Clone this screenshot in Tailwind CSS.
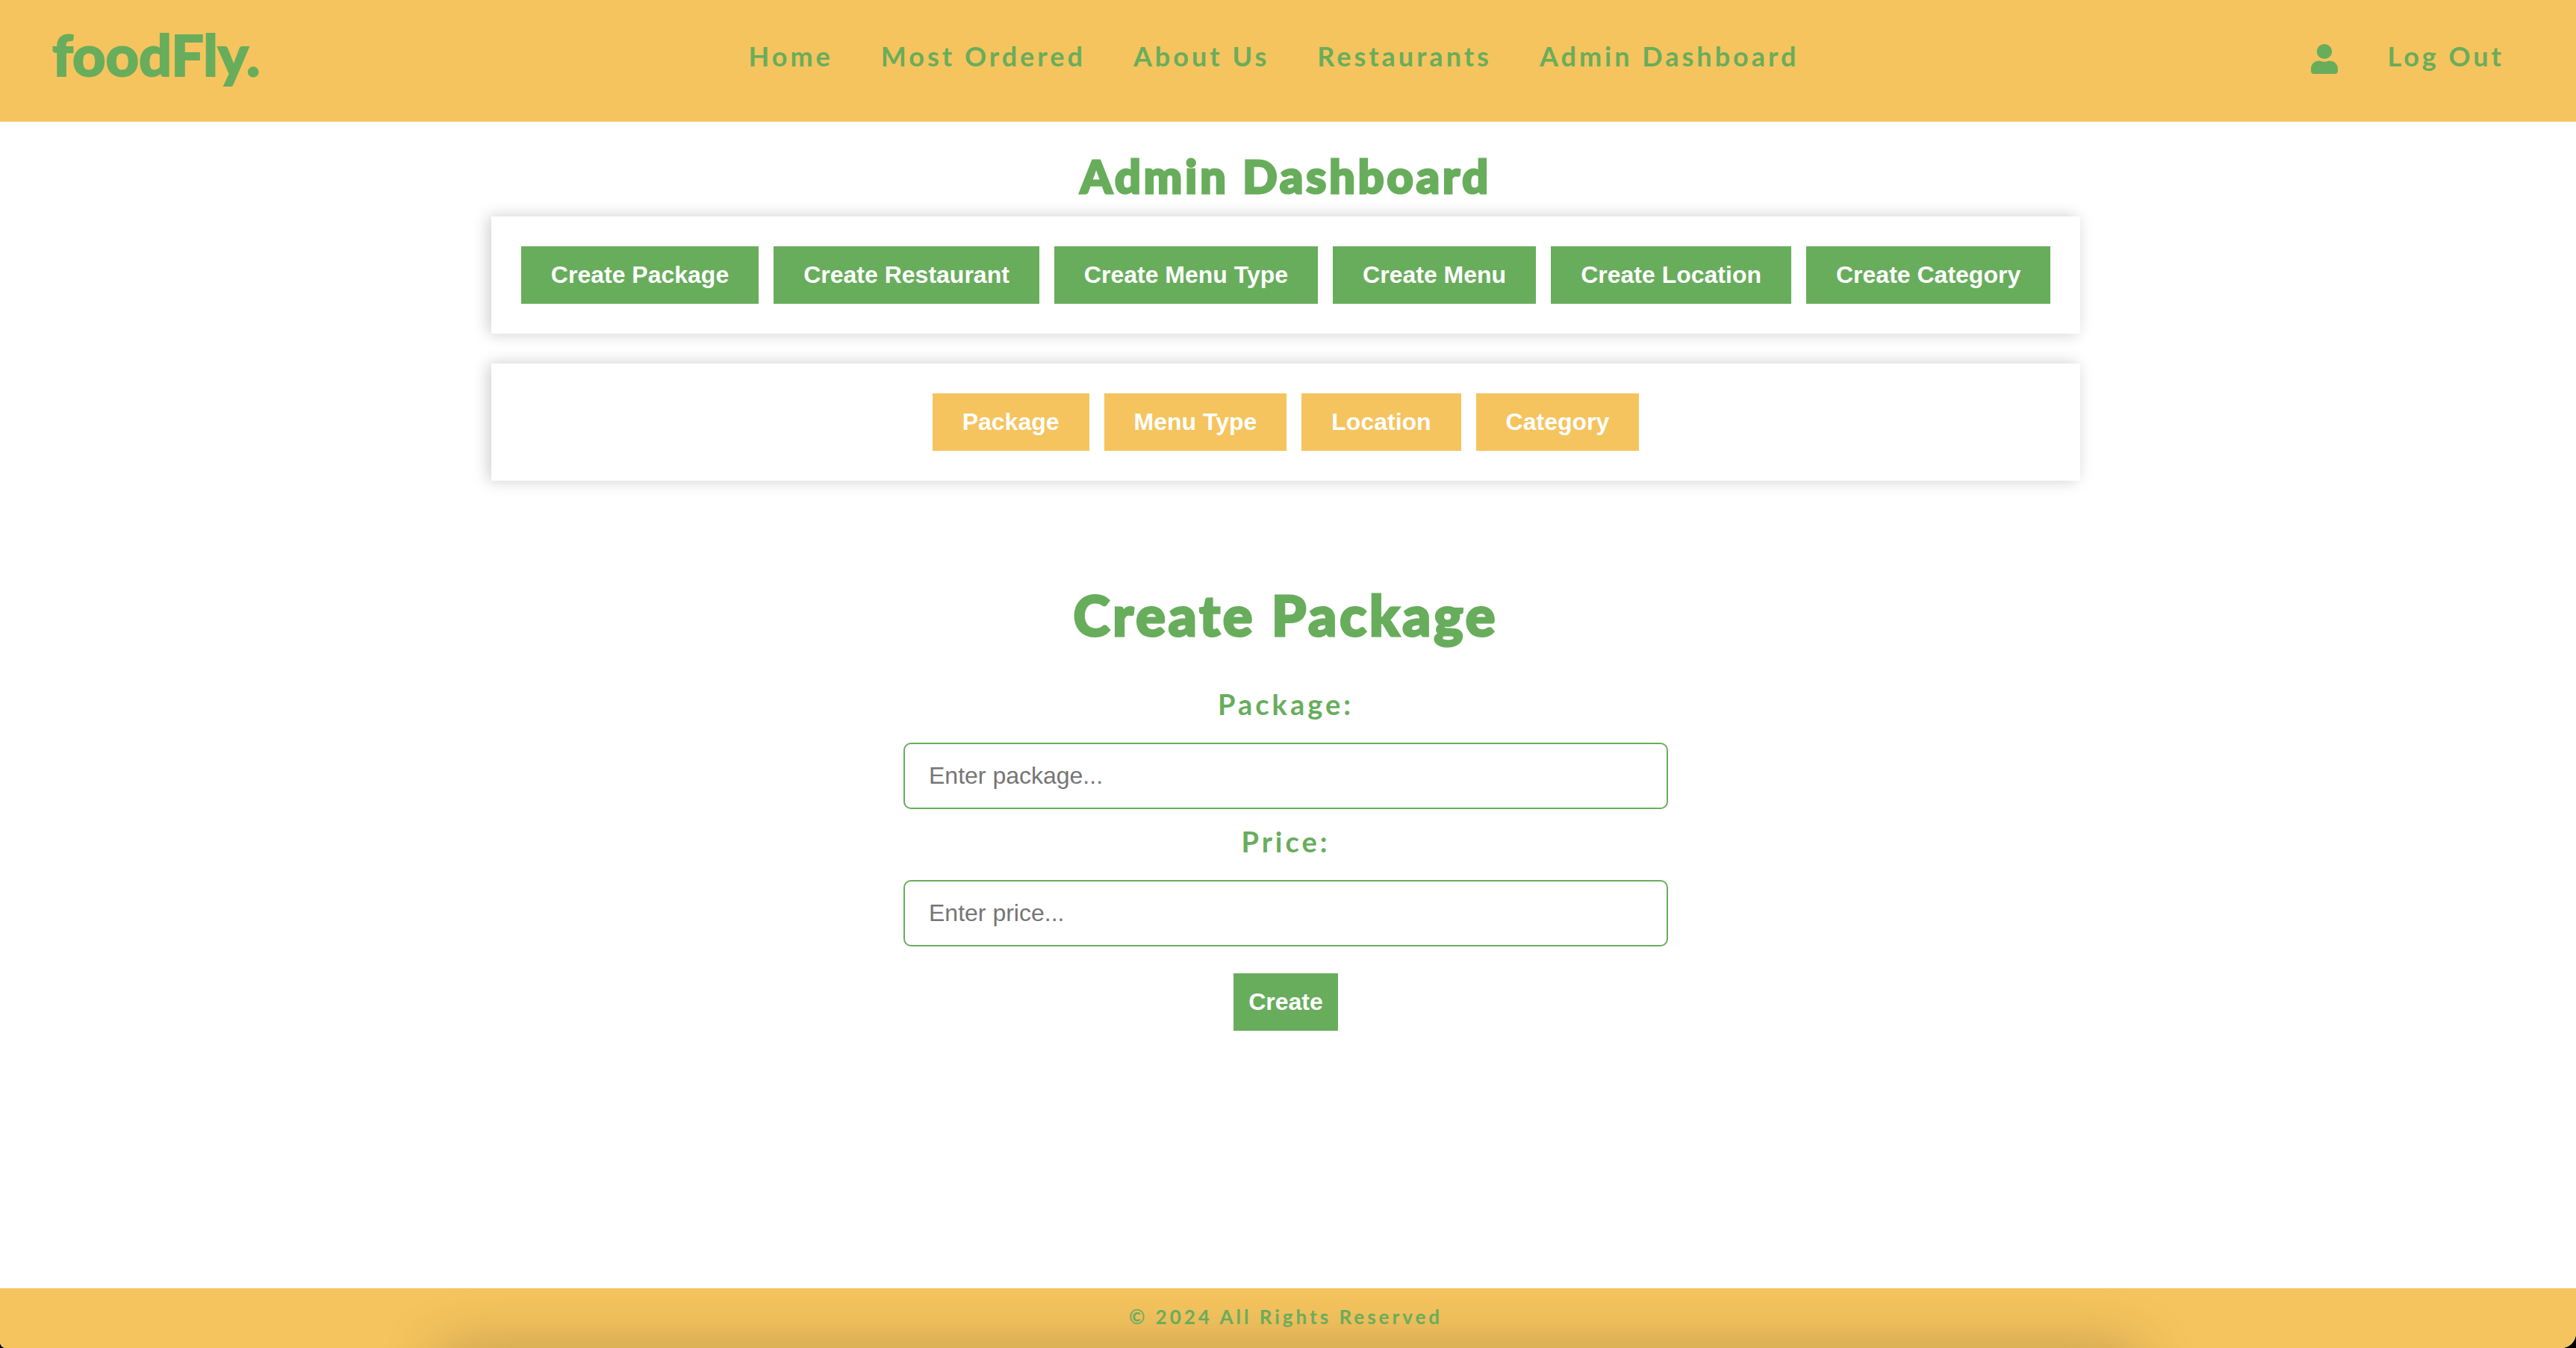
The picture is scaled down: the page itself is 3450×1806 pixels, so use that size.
<!DOCTYPE html>
<html lang="en" class="bg-black">
<head>
<meta charset="utf-8">
<title>foodFly. | Admin Dashboard</title>
<script src="https://cdn.jsdelivr.net/npm/@tailwindcss/browser@4"></script>
</head>
<body class="flex min-h-screen flex-col overflow-hidden rounded-bl-[8px] rounded-br-[20px] bg-white font-[Lato,sans-serif] text-[#68ad5c]">

  <header class="grid h-[163px] grid-cols-[1fr_auto_1fr] items-start bg-[#f5c45e] pr-24 pl-[70px]">
    <a href="#" class="pt-[26px] text-[77px] leading-[92px] font-black [-webkit-text-stroke:2px_currentColor]">foodFly.</a>
    <nav class="flex gap-16 pt-[52px] pr-3 text-[36px] leading-[46px] font-bold tracking-[4px]">
      <a href="#">Home</a>
      <a href="#">Most Ordered</a>
      <a href="#">About Us</a>
      <a href="#">Restaurants</a>
      <a href="#">Admin Dashboard</a>
    </nav>
    <div class="flex items-start justify-end gap-[66px] pt-[52px] text-[36px] leading-[46px] font-bold tracking-[4px]">
      <a href="#" aria-label="Profile" class="pt-[7px]">
        <svg class="h-10 w-9" viewBox="0 0 448 512" preserveAspectRatio="none" fill="currentColor"><path d="M224 256a128 128 0 1 0 0-256 128 128 0 0 0 0 256zm89.600 32h-16.700a174 174 0 0 1-145.800 0h-16.700C60.200 288 0 348.200 0 422.400V464c0 26.500 21.500 48 48 48h352c26.500 0 48-21.500 48-48v-41.600c0-74.200-60.200-134.400-134.400-134.400z"/></svg>
      </a>
      <a href="#">Log Out</a>
    </div>
  </header>

  <main class="flex flex-col items-center pr-1.5">
    <h1 class="pt-[37px] text-[61px] leading-[72px] font-black tracking-[4px] [-webkit-text-stroke:3px_currentColor]">Admin Dashboard</h1>

    <div class="mt-[18px] flex flex-col gap-10 font-['Liberation_Sans',sans-serif] text-[32px] leading-[37px] font-bold text-white">
      <div class="flex justify-center gap-5 bg-white p-10 shadow-[-4px_0_20px_rgba(0,0,0,0.2)]">
        <button class="bg-[#68ad5c] px-10 py-5">Create Package</button>
        <button class="bg-[#68ad5c] px-10 py-5">Create Restaurant</button>
        <button class="bg-[#68ad5c] px-10 py-5">Create Menu Type</button>
        <button class="bg-[#68ad5c] px-10 py-5">Create Menu</button>
        <button class="bg-[#68ad5c] px-10 py-5">Create Location</button>
        <button class="bg-[#68ad5c] px-10 py-5">Create Category</button>
      </div>
      <div class="flex justify-center gap-5 bg-white p-10 shadow-[-4px_0_20px_rgba(0,0,0,0.2)]">
        <button class="bg-[#f5c45e] px-10 py-5">Package</button>
        <button class="bg-[#f5c45e] px-10 py-5">Menu Type</button>
        <button class="bg-[#f5c45e] px-10 py-5">Location</button>
        <button class="bg-[#f5c45e] px-10 py-5">Category</button>
      </div>
    </div>

    <form class="mt-[136px] flex w-[1024px] max-w-full flex-col items-center">
      <h2 class="text-[74px] leading-[88px] font-black tracking-[4px] [-webkit-text-stroke:3px_currentColor]">Create Package</h2>
      <label for="package" class="mt-[52px] text-[38px] leading-[46px] font-bold tracking-[4px]">Package:</label>
      <input id="package" type="text" placeholder="Enter package..." class="mt-[29px] h-[89px] w-full rounded-[10px] border-2 border-[#68ad5c] px-8 font-['Liberation_Sans',sans-serif] text-[32px] placeholder:text-[#757575]">
      <label for="price" class="mt-5 text-[38px] leading-[46px] font-bold tracking-[4px]">Price:</label>
      <input id="price" type="text" placeholder="Enter price..." class="mt-[29px] h-[89px] w-full rounded-[10px] border-2 border-[#68ad5c] px-8 font-['Liberation_Sans',sans-serif] text-[32px] placeholder:text-[#757575]">
      <button type="submit" class="mt-9 bg-[#68ad5c] px-5 py-5 font-['Liberation_Sans',sans-serif] text-[32px] leading-[37px] font-bold text-white">Create</button>
    </form>
  </main>

  <footer class="relative mt-auto h-20 overflow-hidden bg-[#f5c45e] pt-[22px] pr-1.5 text-center text-[26px] leading-[32px] font-bold tracking-[4px]">
    <div class="absolute top-full right-[17%] left-[17%] h-20 shadow-[0_0_80px_rgba(0,0,0,0.22)]"></div>
    <p class="relative">© 2024 All Rights Reserved</p>
  </footer>
</body>
</html>
